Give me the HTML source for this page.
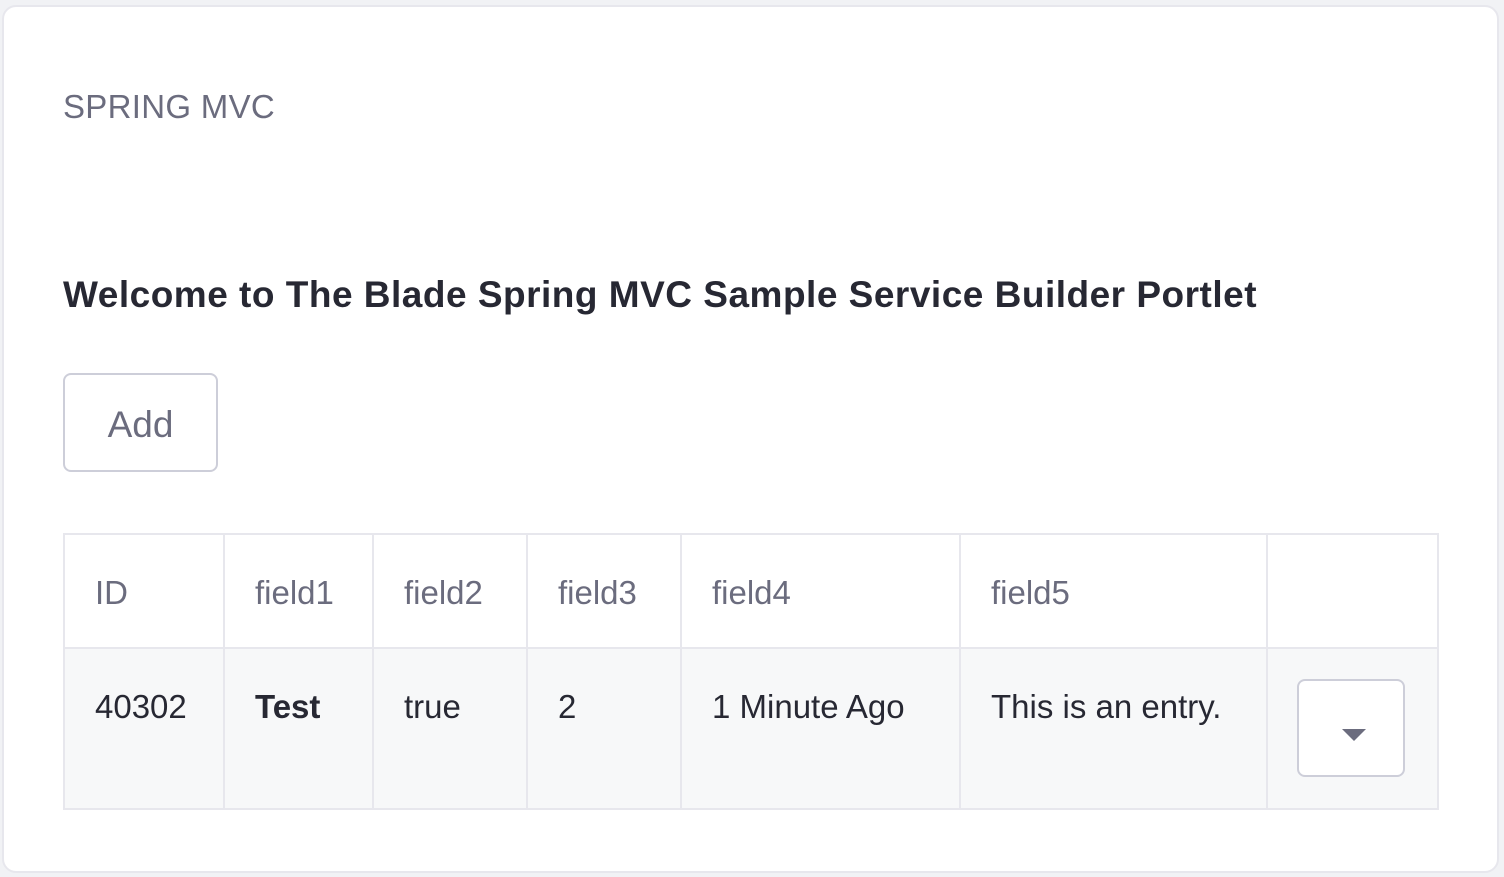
<!DOCTYPE html>
<html><head><style>
body{margin:0;width:1504px;height:877px;background:#f1f2f5;font-family:"Liberation Sans",sans-serif;position:relative;overflow:hidden}
.card{position:absolute;left:2px;top:5px;width:1493px;height:864px;background:#fff;border:2px solid #e7e7ed;border-radius:14px}
.t1{position:absolute;left:63px;top:88px;font-size:33px;color:#6b6c7e;letter-spacing:0.3px}
.t2{position:absolute;left:63px;top:274px;font-size:37px;font-weight:600;color:#272833;letter-spacing:0.5px;white-space:nowrap}
.add{position:absolute;left:63px;top:373px;width:151px;height:95px;border:2px solid #cdced9;border-radius:8px;box-sizing:content-box;font-size:37px;color:#6b6c7e;text-align:center;line-height:99px}
table{position:absolute;left:63px;top:533px;border-collapse:collapse;font-size:33px}
td{border:2px solid #e7e7ed;padding:4px 0 0 30px;vertical-align:top;box-sizing:border-box}
tr.h td{height:114px;color:#6b6c7e;line-height:108px}
tr.b td{height:161px;background:#f7f8f9;color:#272833;line-height:108px}
.dd{position:absolute;left:1297px;top:679px;width:104px;height:94px;background:#fff;border:2px solid #cdced9;border-radius:8px}
.dd:after{content:"";position:absolute;left:43px;top:48px;border-left:12px solid transparent;border-right:12px solid transparent;border-top:12px solid #6b6c7e}
</style></head><body>
<div class="card"></div>
<div class="t1">SPRING MVC</div>
<div class="t2">Welcome to The Blade Spring MVC Sample Service Builder Portlet</div>
<div class="add">Add</div>
<table>
<tr class="h"><td style="width:160px">ID</td><td style="width:149px">field1</td><td style="width:154px">field2</td><td style="width:154px">field3</td><td style="width:279px">field4</td><td style="width:307px">field5</td><td style="width:171px"></td></tr>
<tr class="b"><td>40302</td><td style="font-weight:bold">Test</td><td>true</td><td>2</td><td>1 Minute Ago</td><td>This is an entry.</td><td></td></tr>
</table>
<div class="dd"></div>
</body></html>
